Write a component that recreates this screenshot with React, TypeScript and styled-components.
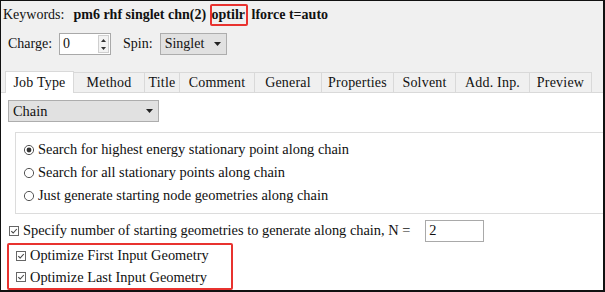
import React from "react";
import styled, { createGlobalStyle } from "styled-components";

const GlobalStyle = createGlobalStyle`
  html, body {
    margin: 0;
    padding: 0;
    background: #ffffff;
  }
  * {
    box-sizing: border-box;
  }
`;

const Frame = styled.div`
  width: 605px;
  height: 292px;
  border-top: 1px solid #111;
  border-right: 2px solid #111;
  border-bottom: 2px solid #111;
  border-left: 1px solid #111;
  background: #f0f0f0;
  font-family: "Liberation Serif", "Times New Roman", serif;
  font-size: 14px;
  color: #111;
  display: flex;
  flex-direction: column;
  overflow: hidden;
`;

const KeywordLine = styled.div`
  height: 29px;
  padding: 0 0 0 2px;
  display: flex;
  align-items: center;
  white-space: pre;
`;

const Keywords = styled.span`
  font-weight: bold;
  margin-left: 9px;
`;

const RedMark = styled.span`
  border: 2px solid #e8322f;
  border-radius: 2px;
  padding: 1px 1px 2px 0;
`;

const SettingsRow = styled.div`
  height: 30px;
  padding-left: 7px;
  display: flex;
  align-items: center;
  gap: 7px;
`;

const SpinBox = styled.div`
  width: 52px;
  height: 22px;
  background: #fff;
  border: 1px solid #a9a9a9;
  display: flex;
  align-items: center;
  padding-left: 3px;
  margin-right: 5px;
`;

const SpinValue = styled.span`
  flex: 1;
`;

const SpinButtons = styled.div`
  width: 11px;
  height: 18px;
  margin-right: 1px;
  border: 1px solid #cfcfcf;
  background: #f3f3f3;
  display: flex;
  flex-direction: column;
  align-items: center;
  justify-content: space-around;
`;

const Select = styled.div<{ $width: number }>`
  width: ${({ $width }) => $width}px;
  height: 22px;
  background: #e1e1e1;
  border: 1px solid #adadad;
  display: flex;
  align-items: center;
  justify-content: space-between;
  padding: 0 5px 0 4px;
`;

const TabBar = styled.div`
  margin-top: 12px;
  padding-left: 4px;
  display: flex;
  align-items: flex-end;
  height: 21px;
`;

const Tab = styled.div<{ $active?: boolean; $width: number }>`
  width: ${({ $width }) => $width}px;
  height: ${({ $active }) => ($active ? 22 : 20)}px;
  margin-bottom: ${({ $active }) => ($active ? -1 : 0)}px;
  background: ${({ $active }) => ($active ? "#ffffff" : "#f0f0f0")};
  border: 1px solid #d9d9d9;
  border-bottom: none;
  margin-right: -1px;
  display: flex;
  align-items: center;
  justify-content: center;
  padding-top: ${({ $active }) => ($active ? 0 : 1)}px;
  letter-spacing: 0.2px;
  position: relative;
  z-index: ${({ $active }) => ($active ? 1 : 0)};
`;

const Content = styled.div`
  flex: 1;
  background: #ffffff;
  border-top: 1px solid #d9d9d9;
  padding: 7px 0 0 7px;
  display: flex;
  flex-direction: column;
  font-size: 14.4px;
`;

const GroupBox = styled.div`
  margin: 10px -4px 0 7px;
  height: 82px;
  border: 1px solid #dcdcdc;
  border-right: none;
  padding: 5px 0 0 7px;
  display: flex;
  flex-direction: column;
`;

const OptionRow = styled.div`
  height: 23px;
  display: flex;
  align-items: center;
  gap: 3px;
  white-space: nowrap;
`;

const CheckRow = styled(OptionRow)`
  padding-left: 0;
`;

const NumberBox = styled.div`
  width: 59px;
  height: 22px;
  border: 1px solid #a9a9a9;
  margin-left: 12px;
  padding-left: 3px;
  display: flex;
  align-items: center;
`;

const Highlight = styled.div`
  margin: 1px 0 0 -1px;
  width: 226px;
  height: 47px;
  border: 2px solid #e8322f;
  border-radius: 2px;
  padding: 0 0 0 6px;
  display: flex;
  flex-direction: column;
  justify-content: center;
`;

const Caret = () => (
  <svg width="7" height="4" viewBox="0 0 7 4">
    <path d="M0 0h7L3.5 4z" fill="#222" />
  </svg>
);

const SpinArrow = ({ up }: { up?: boolean }) => (
  <svg width="5" height="3" viewBox="0 0 5 3">
    <path d={up ? "M0 3h5L2.5 0z" : "M0 0h5L2.5 3z"} fill="#333" />
  </svg>
);

const Radio = ({ checked }: { checked?: boolean }) => (
  <svg width="12" height="12" viewBox="0 0 12 12">
    <circle cx="6" cy="6" r="4.6" fill="#fff" stroke="#555" strokeWidth="1" />
    {checked && <circle cx="6" cy="6" r="2.4" fill="#333" />}
  </svg>
);

const Check = () => (
  <svg width="12" height="12" viewBox="0 0 12 12">
    <rect x="1.5" y="1.5" width="9" height="9" fill="#fff" stroke="#666" strokeWidth="1" />
    <path d="M3.3 6.1l1.9 1.9 3.6-4" fill="none" stroke="#444" strokeWidth="1.1" />
  </svg>
);

const tabs: [string, number][] = [
  ["Job Type", 69],
  ["Method", 72],
  ["Title", 36],
  ["Comment", 76],
  ["General", 68],
  ["Properties", 73],
  ["Solvent", 63],
  ["Add. Inp.", 75],
  ["Preview", 63],
];

const radios = [
  "Search for highest energy stationary point along chain",
  "Search for all stationary points along chain",
  "Just generate starting node geometries along chain",
];

export default function App() {
  return (
    <>
      <GlobalStyle />
      <Frame>
        <KeywordLine>
          Keywords:
          <Keywords>
            pm6 rhf singlet chn(2) <RedMark>optilr</RedMark> lforce t=auto
          </Keywords>
        </KeywordLine>
        <SettingsRow>
          <span>Charge:</span>
          <SpinBox>
            <SpinValue>0</SpinValue>
            <SpinButtons>
              <SpinArrow up />
              <SpinArrow />
            </SpinButtons>
          </SpinBox>
          <span>Spin:</span>
          <Select $width={67}>
            <span>Singlet</span>
            <Caret />
          </Select>
        </SettingsRow>
        <TabBar>
          {tabs.map(([name, w], i) => (
            <Tab key={name} $width={w} $active={i === 0}>
              {name}
            </Tab>
          ))}
        </TabBar>
        <Content>
          <Select $width={151}>
            <span>Chain</span>
            <Caret />
          </Select>
          <GroupBox>
            {radios.map((r, i) => (
              <OptionRow key={r}>
                <Radio checked={i === 0} />
                {r}
              </OptionRow>
            ))}
          </GroupBox>
          <CheckRow style={{ marginTop: 5 }}>
            <Check />
            Specify number of starting geometries to generate along chain, N =
            <NumberBox>2</NumberBox>
          </CheckRow>
          <Highlight>
            <CheckRow>
              <Check />
              Optimize First Input Geometry
            </CheckRow>
            <CheckRow>
              <Check />
              Optimize Last Input Geometry
            </CheckRow>
          </Highlight>
        </Content>
      </Frame>
    </>
  );
}
